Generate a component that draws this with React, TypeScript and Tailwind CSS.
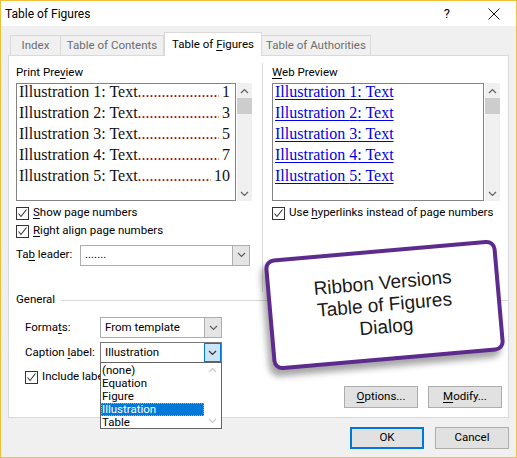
import React from 'react'

const ui = { fontFamily: 'Roboto, "Segoe UI", sans-serif' }
const serif = { fontFamily: '"Liberation Serif", "Times New Roman", serif' }

function Chevron({ color = '#606060', up = false }: { color?: string; up?: boolean }) {
  return (
    <svg width="9" height="6" viewBox="0 0 9 6">
      <polyline
        points={up ? '1,5 4.5,1.5 8,5' : '1,1 4.5,4.5 8,1'}
        fill="none"
        stroke={color}
        strokeWidth="1.2"
      />
    </svg>
  )
}

function Check({ label }: { label: React.ReactNode }) {
  return (
    <div className="flex items-center gap-[4px] h-[18px] whitespace-nowrap">
      <div className="w-[13px] h-[13px] shrink-0 border border-[#333] bg-white flex items-center justify-center">
        <svg width="11" height="11" viewBox="0 0 11 11">
          <polyline points="1.5,5.5 4,8.5 9.5,1.5" fill="none" stroke="#333" strokeWidth="1.1" />
        </svg>
      </div>
      <span className="text-[11.5px] text-black">{label}</span>
    </div>
  )
}

function ScrollBar() {
  return (
    <div className="w-[15px] h-full bg-[#f0f0f0] flex flex-col items-center shrink-0">
      <div className="h-[15px] flex items-center justify-center">
        <Chevron up />
      </div>
      <div className="w-[15px] h-[16px] bg-[#cdcdcd]" />
      <div className="flex-1" />
      <div className="h-[15px] flex items-center justify-center">
        <Chevron />
      </div>
    </div>
  )
}

const rows = [
  ['1', '1'],
  ['2', '3'],
  ['3', '5'],
  ['4', '7'],
  ['5', '10'],
]

function Combo({
  value,
  width,
  open = false,
}: {
  value: string
  width: string
  open?: boolean
}) {
  return (
    <div
      className={`h-[21px] ${width} flex items-center border ${
        open ? 'border-[#7a7a7a]' : 'border-[#adadad]'
      } bg-white`}
    >
      <span className="flex-1 pl-[4px] text-[11.5px] text-black truncate">{value}</span>
      <div
        className={`w-[17px] h-full flex items-center justify-center ${
          open ? 'bg-[#cce4f7] border border-[#0078d7]' : 'bg-[#e5e5e5] border-l border-[#adadad]'
        }`}
      >
        <Chevron color={open ? '#333' : '#606060'} />
      </div>
    </div>
  )
}

function Button({ children, primary = false }: { children: React.ReactNode; primary?: boolean }) {
  return (
    <div
      className={`h-[22px] w-[74px] flex items-center justify-center bg-[#e1e1e1] text-[11.5px] text-black ${
        primary ? 'border-2 border-[#0078d7]' : 'border border-[#adadad]'
      }`}
    >
      <span>{children}</span>
    </div>
  )
}

function Tab({ children, first = false }: { children: React.ReactNode; first?: boolean }) {
  return (
    <div
      className={`h-[20px] border border-b-0 border-[#d9d9d9] flex items-center justify-center text-[11.5px] text-[#6d6d6d] whitespace-nowrap ${
        first ? 'w-[51px]' : 'border-l-0'
      }`}
    >
      <span>{children}</span>
    </div>
  )
}

export default function App() {
  return (
    <div
      className="relative w-[517px] h-[458px] border border-[#f2c037] bg-[#f0f0f0] flex flex-col overflow-hidden"
      style={ui}
    >
      {/* title bar */}
      <div className="h-[25px] bg-white flex items-center pl-[4px] shrink-0">
        <span className="text-[12px] text-black flex-1">Table of Figures</span>
        <span className="text-[13px] text-black mr-[38px]">?</span>
        <svg width="12" height="12" viewBox="0 0 12 12" className="mr-[16px]">
          <path d="M0.5 0.5 L11.5 11.5 M11.5 0.5 L0.5 11.5" stroke="#111" strokeWidth="1" />
        </svg>
      </div>

      {/* tabs */}
      <div className="pt-[6px] px-[8px] shrink-0">
        <div className="flex items-end h-[23px] pl-[1px] relative z-10">
          <Tab first>Index</Tab>
          <div className="w-[103px] shrink-0">
            <Tab>Table of Contents</Tab>
          </div>
          <div className="w-[98px] h-[24px] -mb-px bg-white border border-b-0 border-[#d9d9d9] flex items-center justify-center text-[11.5px] text-black whitespace-nowrap">
            <span>
              Table of <u className="underline-offset-2">F</u>igures
            </span>
          </div>
          <div className="w-[109px] shrink-0">
            <Tab>Table of Authorities</Tab>
          </div>
        </div>
      </div>

      {/* panel */}
      <div className="mx-[7px] h-[363px] bg-white border border-[#d9d9d9] flex flex-col shrink-0">
        <div className="flex h-[243px]">
          {/* left column */}
          <div className="w-[236px] ml-[7px] pt-[7px] flex flex-col">
            <div className="h-[18px] text-[11.5px] text-black leading-[18px]">
              Print Pre<u className="underline-offset-2">v</u>iew
            </div>
            <div className="mt-[2px] flex gap-[1px] h-[118px]">
              <div className="w-[220px] h-full border border-[#828282] bg-white pl-[2px] pr-[5px] overflow-hidden" style={serif}>
                {rows.map(([n, p]) => (
                  <div key={n} className="flex h-[21px] leading-[16px] text-[16px] whitespace-nowrap">
                    <span className="text-[#111] shrink-0">Illustration {n}: Text</span>
                    <span className="flex-1 overflow-hidden text-[#b00000]">
                      ..............................................
                    </span>
                    <span className="text-[#111] pl-[3px] shrink-0">{p}</span>
                  </div>
                ))}
              </div>
              <ScrollBar />
            </div>
            <div className="mt-[3px]">
              <Check label={<><u className="underline-offset-2">S</u>how page numbers</>} />
            </div>
            <Check label={<><u className="underline-offset-2">R</u>ight align page numbers</>} />
            <div className="flex items-center mt-[4px] h-[22px]">
              <span className="w-[64px] text-[11.5px] text-black whitespace-nowrap">
                Ta<u className="underline-offset-2">b</u> leader:
              </span>
              <Combo value="......." width="w-[170px]" />
            </div>
          </div>

          {/* separator */}
          <div className="ml-[10px] mt-[7px] w-px h-[229px] bg-[#d9d9d9]" />

          {/* right column */}
          <div className="w-[228px] ml-[9px] pt-[7px] flex flex-col">
            <div className="h-[18px] text-[11.5px] text-black leading-[18px]">
              <u className="underline-offset-2">W</u>eb Preview
            </div>
            <div className="mt-[2px] flex gap-[1px] h-[118px]">
              <div className="w-[212px] h-full border border-[#828282] bg-white pl-[2px] overflow-hidden" style={serif}>
                {rows.map(([n]) => (
                  <div key={n} className="h-[21px] leading-[16px] text-[16px] text-[#0000ee] whitespace-nowrap">
                    <span className="underline underline-offset-2">Illustration {n}: Text</span>
                  </div>
                ))}
              </div>
              <ScrollBar />
            </div>
            <div className="mt-[3px]">
              <Check
                label={
                  <>
                    Use <u className="underline-offset-2">h</u>yperlinks instead of page numbers
                  </>
                }
              />
            </div>
          </div>
        </div>

        {/* General group */}
        <div className="flex items-center ml-[7px] h-[16px]">
          <span className="text-[11.5px] text-black">General</span>
          <div className="flex-1 h-px bg-[#d9d9d9] ml-[6px]" />
        </div>
        <div className="ml-[16px] mt-[9px] flex flex-col gap-[4px]">
          <div className="flex items-center">
            <span className="w-[75px] text-[11.5px] text-black whitespace-nowrap">
              Forma<u className="underline-offset-2">t</u>s:
            </span>
            <Combo value="From template" width="w-[122px]" />
          </div>
          <div className="flex items-center relative">
            <span className="w-[75px] text-[11.5px] text-black whitespace-nowrap">
              Caption <u className="underline-offset-2">l</u>abel:
            </span>
            <div className="relative z-20">
              <Combo value="Illustration" width="w-[122px]" open />
              <div className="absolute left-0 top-[20px] w-[122px] h-[67px] bg-white border border-[#646464] flex">
                <div className="flex-1 flex flex-col text-[11.5px] leading-[13px] text-black pt-px">
                  <span className="pl-[1px]">(none)</span>
                  <span className="pl-[1px]">Equation</span>
                  <span className="pl-[1px]">Figure</span>
                  <span className="pl-[1px] bg-[#0078d7] text-white outline outline-1 outline-dotted outline-[#f0a030] -outline-offset-1">
                    Illustration
                  </span>
                  <span className="pl-[1px]">Table</span>
                </div>
                <div className="w-[17px] h-full flex flex-col items-center justify-between py-[4px]">
                  <Chevron up color="#c8c8c8" />
                  <Chevron color="#c8c8c8" />
                </div>
              </div>
            </div>
          </div>
          <div className="mt-[1px]">
            <Check label="Include label and number" />
          </div>
        </div>
        <div className="flex-1" />
        <div className="flex justify-end gap-[10px] pr-[6px] pb-[9px]">
          <Button>
            <u className="underline-offset-2">O</u>ptions...
          </Button>
          <Button>
            <u className="underline-offset-2">M</u>odify...
          </Button>
        </div>
      </div>

      {/* bottom buttons */}
      <div className="flex justify-end gap-[11px] pr-[7px] pt-[9px]">
        <Button primary>OK</Button>
        <Button>Cancel</Button>
      </div>

      {/* callout */}
      <div
        className="absolute left-[267px] top-[248px] w-[233px] h-[112px] rotate-[-5deg] bg-white border-[4px] border-[#5d2a8e] rounded-[10px] shadow-[-4px_6px_6px_rgba(0,0,0,0.35)] flex flex-col items-center justify-center text-[19px] leading-[22px] text-[#1a1a1a] z-30"
        style={{ fontFamily: '"Liberation Sans", Arial, sans-serif' }}
      >
        <span>Ribbon Versions</span>
        <span>Table of Figures</span>
        <span>Dialog</span>
      </div>
    </div>
  )
}
